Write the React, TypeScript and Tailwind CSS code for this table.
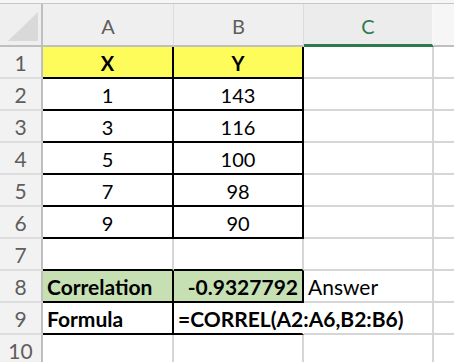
import React from "react";

type Cell = {
  t?: string;
  bold?: boolean;
  align?: "left" | "center" | "right";
  bg?: string;
  r?: string;
  b?: string;
  z?: boolean;
  big?: boolean;
};

const FONT = "font-['Lato','Carlito','Liberation_Sans',sans-serif]";

type Row = { n: number; a: Cell; bCell: Cell; c: Cell };

const rows: Row[] = [
  { n: 1, a: { t: "X", bold: true, align: "center", bg: "bg-[#fdfc5a]", r: "border-r-[#000000]", b: "border-b-[#000000]" }, bCell: { t: "Y", bold: true, align: "center", bg: "bg-[#fdfc5a]", r: "border-r-[#000000]", b: "border-b-[#000000]" }, c: {} },
  { n: 2, a: { t: "1", align: "center", r: "border-r-[#000000]", b: "border-b-[#000000]" }, bCell: { t: "143", align: "center", r: "border-r-[#000000]", b: "border-b-[#000000]" }, c: {} },
  { n: 3, a: { t: "3", align: "center", r: "border-r-[#000000]", b: "border-b-[#000000]" }, bCell: { t: "116", align: "center", r: "border-r-[#000000]", b: "border-b-[#000000]" }, c: {} },
  { n: 4, a: { t: "5", align: "center", r: "border-r-[#000000]", b: "border-b-[#000000]" }, bCell: { t: "100", align: "center", r: "border-r-[#000000]", b: "border-b-[#000000]" }, c: {} },
  { n: 5, a: { t: "7", align: "center", r: "border-r-[#000000]", b: "border-b-[#000000]" }, bCell: { t: "98", align: "center", r: "border-r-[#000000]", b: "border-b-[#000000]" }, c: {} },
  { n: 6, a: { t: "9", align: "center", r: "border-r-[#000000]", b: "border-b-[#000000]" }, bCell: { t: "90", align: "center", r: "border-r-[#000000]", b: "border-b-[#000000]" }, c: {} },
  { n: 7, a: { r: "border-r-[#d6d6d6]", b: "border-b-[#000000]" }, bCell: { r: "border-r-[#d6d6d6]", b: "border-b-[#000000]" }, c: {} },
  { n: 8, a: { t: "Correlation", bold: true, big: true, align: "left", bg: "bg-[#c6e0b4]", r: "border-r-[#000000]", b: "border-b-[#000000]" }, bCell: { t: "-0.9327792", bold: true, big: true, align: "right", bg: "bg-[#c6e0b4]", r: "border-r-[#000000]", b: "border-b-[#000000]" }, c: { t: "Answer", big: true, align: "left" } },
  { n: 9, a: { t: "Formula", bold: true, big: true, align: "left", r: "border-r-[#000000]", b: "border-b-[#000000]" }, bCell: { t: "=CORREL(A2:A6,B2:B6)", bold: true, big: true, align: "left", r: "border-r-transparent", b: "border-b-[#000000]", z: true }, c: {} },
  { n: 10, a: {}, bCell: {}, c: {} },
];

function DataCell({ cell, w }: { cell: Cell; w: string }) {
  const align =
    cell.align === "center"
      ? "justify-center"
      : cell.align === "right"
      ? "justify-end pr-[4px]"
      : "justify-start pl-[4px]";
  return (
    <div
      className={`${w} h-full shrink-0 flex items-end pb-[2px] border-r-2 border-b-2 ${cell.r ?? "border-r-[#d6d6d6]"} ${cell.b ?? "border-b-[#d6d6d6]"} ${cell.bg ?? "bg-white"} ${align} ${cell.z ? "relative z-10 bg-transparent" : ""}`}
    >
      {cell.t ? (
        <span
          className={`whitespace-nowrap ${cell.big ? "text-[21px]" : "text-[20px]"} leading-[24px] text-black ${cell.bold ? "font-bold" : "font-normal"}`}
        >
          {cell.t}
        </span>
      ) : null}
    </div>
  );
}

export default function App() {
  return (
    <div className={`w-[454px] h-[362px] overflow-hidden bg-white ${FONT}`}>
      <div className="h-[3px] bg-[#f6f6f6]" />
      <div className="flex h-[44px] border-t border-[#c6c6c6]">
        <div className="w-[43px] shrink-0 h-full bg-[#efefef] border-r-2 border-b-2 border-[#bfbfbf] flex items-end justify-end pr-[3px] pb-[4px]">
          <svg width="30" height="29" viewBox="0 0 30 29">
            <polygon points="0,29 30,29 30,0" fill="#d9d9d9" />
          </svg>
        </div>
        <div className="w-[131px] shrink-0 h-full bg-[#efefef] border-r border-r-[#dcdcdc] border-b-2 border-b-[#bfbfbf] flex items-center justify-center pt-[2px]">
          <span className="text-[20px] text-[#5e5e5e]">A</span>
        </div>
        <div className="w-[130px] shrink-0 h-full bg-[#efefef] border-r border-r-[#dcdcdc] border-b-2 border-b-[#bfbfbf] flex items-center justify-center pt-[2px]">
          <span className="text-[20px] text-[#5e5e5e]">B</span>
        </div>
        <div className="w-[130px] shrink-0 h-full bg-[#ececec] border-r-2 border-r-[#f8f8f8] border-b-[3px] border-b-[#2d7a4c] flex items-center justify-center pt-[3px]">
          <span className="text-[20px] text-[#2f7a4c]">C</span>
        </div>
        <div className="flex-1 h-full bg-[#f6f6f6] border-b-2 border-b-[#bfbfbf]" />
      </div>
      {rows.map((row) => (
        <div key={row.n} className="flex h-[32px]">
          <div className="w-[43px] shrink-0 h-full bg-[#f2f2f2] border-r-2 border-r-[#bfbfbf] border-b-2 border-b-[#dedede] flex items-end justify-center pb-[2px]">
            <span className="text-[21px] leading-[24px] text-[#5e5e5e]">{row.n}</span>
          </div>
          <DataCell cell={row.a} w="w-[131px]" />
          <DataCell cell={row.bCell} w="w-[130px]" />
          <DataCell cell={row.c} w="w-[130px]" />
          <div className="flex-1 h-full border-b-2 border-b-[#d6d6d6]" />
        </div>
      ))}
    </div>
  );
}
